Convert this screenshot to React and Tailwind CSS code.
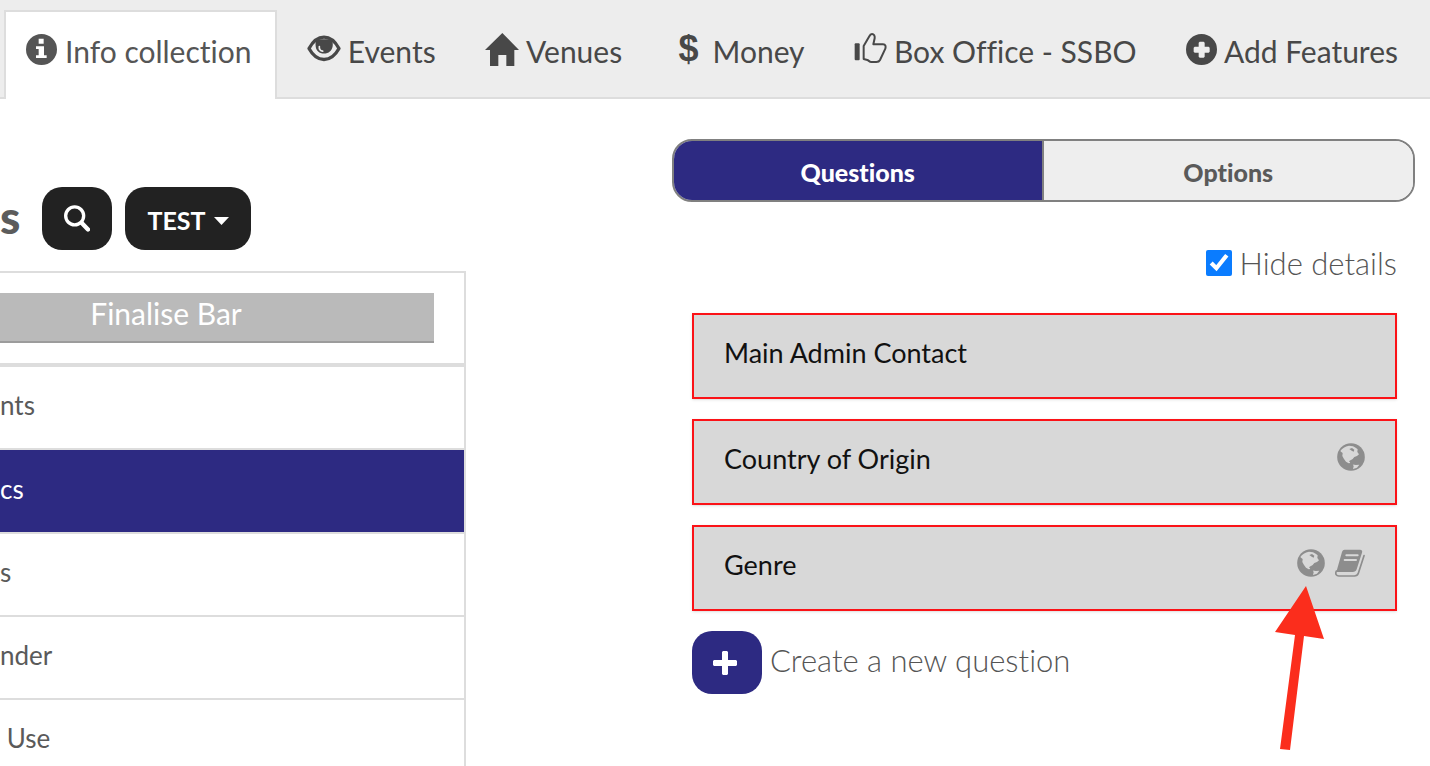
import React from 'react';

const InfoIcon = () => (
  <svg className="w-[31px] h-[31px]" viewBox="0 0 93 93" fill="currentColor" aria-hidden="true">
    <path fillRule="evenodd" d="M46.500 0a46.500 46.500 0 100 93a46.500 46.500 0 100-93zM38 14h15v15H38zM30 37h24v27h8v8H30v-8h8V45h-8z" />
  </svg>
);

const EyeIcon = () => (
  <svg className="w-[34px] h-[27px] mb-0.5" viewBox="0 0 102 80" aria-hidden="true">
    <path d="M6 40C18 18 34 6 51 6s33 12 45 34C84 62 68 73 51 73S18 62 6 40z" fill="none" stroke="currentColor" strokeWidth="10" strokeLinejoin="round" />
    <path d="M28 12h46c3 6 4 14 3 21-2 13-12 22-26 22S27 46 26 33c-1-8 0-15 2-21z" fill="currentColor" />
    <path d="M37 34c-1 8 3 14 10 14" fill="none" stroke="#ededed" strokeWidth="5" strokeLinecap="round" />
  </svg>
);

const HomeIcon = () => (
  <svg className="w-[34px] h-[33px]" viewBox="0 0 102 99" fill="currentColor" aria-hidden="true">
    <path d="M52 0l50 51H88v48H64V66H40v33H15V51H0z" />
  </svg>
);

const DollarIcon = () => (
  <span className="w-[34px] pb-0.5 text-4xl leading-none text-center font-bold font-['Liberation_Sans',sans-serif]" aria-hidden="true">$</span>
);

const ThumbIcon = () => (
  <svg className="w-[33px] h-[30px] mb-1" viewBox="0 0 99 90" aria-hidden="true">
    <rect x="2" y="31" width="15" height="51" rx="3" fill="currentColor" />
    <path d="M29 39L46 10c2-5 5-7 8-7 6 0 9 6 8 13l-4 18h29c8 0 9 6 7 13L78 81c-2 4-6 6-11 6H52c-6 0-8-5-12-6l-11-3z" fill="none" stroke="currentColor" strokeWidth="6" strokeLinejoin="round" />
  </svg>
);

const PlusCircleIcon = () => (
  <svg className="w-[31px] h-[31px]" viewBox="0 0 93 93" fill="currentColor" aria-hidden="true">
    <path fillRule="evenodd" d="M46.500 0a46.500 46.500 0 100 93a46.500 46.500 0 100-93zM41 23h12l3 3v12h12l3 3v12l-3 3H56v12l-3 3H41l-3-3V56H26l-3-3V41l3-3h12V26z" />
  </svg>
);

const SearchIcon = () => (
  <svg className="w-[26px] h-[27px]" viewBox="0 0 78 80" fill="none" stroke="currentColor" aria-hidden="true">
    <circle cx="32" cy="32" r="27" strokeWidth="10" />
    <path d="M54 54l18 19" strokeWidth="13" strokeLinecap="round" />
  </svg>
);

const GlobeIcon = () => (
  <svg className="w-[28px] h-[28px]" viewBox="0 0 84 84" aria-hidden="true">
    <circle cx="42" cy="42" r="41.500" fill="#8d8d8d" />
    <g fill="#d8d8d8">
      <path d="M10 24C15 16 24 10 36 8l12 2 8 4 6 5-1 8 5 7-6 5-8 3-5 6-5 3-4 4 2 5-5 1-8-5-6-8-5-9 1-9-5-4z" />
      <path d="M47 63l9 3 11-1-7 9-12 4 2-8z" />
    </g>
    <path d="M37 18l8-3 7 5-2 6-6-3z" fill="#8d8d8d" />
    <path d="M36 54l7-2 4 5 8 1v6l-10 1z" fill="#8d8d8d" />
  </svg>
);

const BookIcon = () => (
  <svg className="w-[30px] h-[28px]" viewBox="0 0 90 84" fill="none" aria-hidden="true">
    <path d="M29 2h46c6 0 8 4 6 9L65 61c-2 6-6 8-12 8H4L21 9c2-5 4-7 8-7z" fill="#8d8d8d" />
    <path d="M4 66c-4 9 0 15 8 15h46c6 0 10-2 12-8l17-53" stroke="#8d8d8d" strokeWidth="5" strokeLinecap="round" />
    <path d="M34 19h34M29 33h34" stroke="#d8d8d8" strokeWidth="6" strokeLinecap="round" />
  </svg>
);

const PlusIcon = () => (
  <svg className="w-6 h-6" viewBox="0 0 24 24" fill="currentColor" aria-hidden="true">
    <path d="M9 1l1-1h4l1 1v8h8l1 1v4l-1 1h-8v8l-1 1h-4l-1-1v-8H1l-1-1v-4l1-1h8z" />
  </svg>
);

const tabs = [
  { label: 'Info collection', icon: <InfoIcon />, active: true },
  { label: 'Events', icon: <EyeIcon /> },
  { label: 'Venues', icon: <HomeIcon /> },
  { label: 'Money', icon: <DollarIcon /> },
  { label: 'Box Office - SSBO', icon: <ThumbIcon /> },
  { label: 'Add Features', icon: <PlusCircleIcon /> },
];

const Tab = ({ label, icon, active }) => (
  <a
    href="#"
    className={
      active
        ? 'flex items-center gap-2 h-[89px] pb-3 pl-5 pr-6 border-2 border-b-0 border-[#ddd] bg-white text-[#555] whitespace-nowrap'
        : 'flex items-center gap-[7px] h-[87px] pb-3 px-5 text-[#484848] whitespace-nowrap'
    }
  >
    {icon}
    <span className="pt-1">{label}</span>
  </a>
);

const rows = [
  { label: 'nts' },
  { label: 'cs', active: true },
  { label: 's' },
  { label: 'nder' },
  { label: '\u00a0Use' },
];

const Sidebar = () => (
  <section>
    <div className="flex items-center pt-12 text-[#5c5c5c]">
      <h2 className="w-[42px] pb-1 text-[46px] leading-none font-black">s</h2>
      <button type="button" aria-label="Search" className="flex items-center justify-center w-[70px] h-[63px] rounded-[20px] bg-[#222] text-white">
        <SearchIcon />
      </button>
      <button type="button" className="flex items-center justify-center gap-2 w-[126px] h-[63px] ml-[13px] pt-1 rounded-[20px] bg-[#222] text-white text-[25px] font-bold">
        TEST
        <svg className="w-[15px] h-2" viewBox="0 0 15 8" fill="currentColor" aria-hidden="true">
          <path d="M0 0h15L7.500 8z" />
        </svg>
      </button>
    </div>
    <div className="mt-[21px] border-t-2 border-r-2 border-[#ddd]">
      <div className="pt-5 pb-5 pr-[30px] border-b-4 border-[#ddd]">
        <button type="button" className="block w-full h-[50px] pb-2 pr-[102px] bg-[#bababa] border-b-2 border-[#9c9c9c] text-white text-[30px] leading-none text-center">
          Finalise Bar
        </button>
      </div>
      <ul>
        {rows.map((row) => (
          <li key={row.label} className={row.active ? 'h-[84px] border-b-2 border-[#ddd]' : 'h-[83px] border-b-2 border-[#ddd]'}>
            <a
              href="#"
              className={
                row.active
                  ? 'flex items-center h-full pb-1 bg-[#2d2a82] text-white text-[26px]'
                  : 'flex items-center h-full pb-1 text-[#5a5a5a] text-[26px]'
              }
            >
              {row.label}
            </a>
          </li>
        ))}
      </ul>
    </div>
  </section>
);

const Question = ({ title, children }) => (
  <div className="relative flex justify-between h-[86px] px-[30px] border-2 border-[#fb1217] bg-[#d8d8d8] shadow-sm">
    <h3 className="pt-5 text-[27px] leading-9 text-[#111]">{title}</h3>
    <div className="flex gap-[10px] pt-[22px]">{children}</div>
  </div>
);

const Arrow = () => (
  <svg className="absolute right-[70px] top-[59px] w-[50px] h-[164px]" viewBox="0 0 50 164" fill="#fb2d1c" aria-hidden="true">
    <path d="M31 0l18 53-20-3L15 164l-10-1L20 49 0 46z" />
  </svg>
);

const Questions = () => (
  <section>
    <div className="grid grid-cols-2 h-[63px] rounded-[20px] border-2 border-[#808080] overflow-hidden text-[25px] font-black">
      <button type="button" className="pt-1 bg-[#2d2a82] text-white border-r-2 border-[#808080]">Questions</button>
      <button type="button" className="pt-1 bg-[#eee] text-[#5a5a5a]">Options</button>
    </div>
    <div className="pl-5 pr-[18px] text-[#555] text-[31px] font-light">
      <label className="flex items-center justify-end gap-2 h-[84px] mt-[19px] mb-2">
        <input type="checkbox" defaultChecked className="w-[26px] h-[26px] accent-[#0a7cff]" />
        Hide details
      </label>
      <div className="space-y-5 font-normal">
        <Question title="Main Admin Contact" />
        <Question title="Country of Origin">
          <GlobeIcon />
        </Question>
        <Question title="Genre">
          <GlobeIcon />
          <BookIcon />
          <Arrow />
        </Question>
      </div>
      <div className="flex items-center gap-2 mt-5">
        <button type="button" aria-label="Create a new question" className="flex items-center justify-center w-[70px] h-[63px] pr-1 rounded-[20px] bg-[#2d2a82] text-white">
          <PlusIcon />
        </button>
        <span className="pb-1">Create a new question</span>
      </div>
    </div>
  </section>
);

const App = () => {
  return (
    <div className="h-screen overflow-hidden bg-white font-['Lato',sans-serif] [font-variant-ligatures:none]">
      <nav className="flex items-end justify-between h-[99px] pl-1 pr-3 bg-[#ededed] text-[30px] shadow-[inset_0_-2px_0_#ddd]">
        {tabs.map((tab) => (
          <Tab key={tab.label} {...tab} />
        ))}
      </nav>
      <main className="grid grid-cols-[466fr_743fr] gap-x-[206px] pt-10 pr-[15px]">
        <Sidebar />
        <Questions />
      </main>
    </div>
  );
};

export default App;
